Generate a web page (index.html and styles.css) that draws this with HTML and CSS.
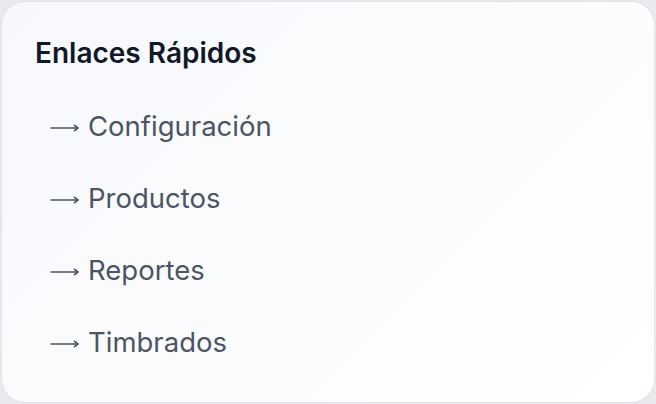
FILE: index.html
```html
<!DOCTYPE html>
<html lang="es">
<head>
<meta charset="utf-8">
<link rel="stylesheet" href="styles.css">
</head>
<body>
<section class="card">
  <h2 class="title">Enlaces Rápidos</h2>
  <ul class="links">
    <li><a href="#"><svg class="arrow" viewBox="0 0 29 12" width="29" height="12"><path d="M0.5 6H28M24 2.8L28 6L24 9.2"/></svg>Configuración</a></li>
    <li><a href="#"><svg class="arrow" viewBox="0 0 29 12" width="29" height="12"><path d="M0.5 6H28M24 2.8L28 6L24 9.2"/></svg>Productos</a></li>
    <li><a href="#"><svg class="arrow" viewBox="0 0 29 12" width="29" height="12"><path d="M0.5 6H28M24 2.8L28 6L24 9.2"/></svg>Reportes</a></li>
    <li><a href="#"><svg class="arrow" viewBox="0 0 29 12" width="29" height="12"><path d="M0.5 6H28M24 2.8L28 6L24 9.2"/></svg>Timbrados</a></li>
  </ul>
</section>
</body>
</html>
```
FILE: styles.css
```css
html, body {
  margin: 0;
  padding: 0;
  background: #e9eaee;
  height: 100%;
}
body {
  padding: 1px;
  box-sizing: border-box;
  font-family: Inter, "Noto Sans", sans-serif;
}
.card {
  box-sizing: border-box;
  height: 100%;
  border: 1px solid #e1e3e8;
  border-radius: 24px;
  background: linear-gradient(135deg, #f7f8fc 0%, #ffffff 100%);
  padding: 33px 33px;
}
.title {
  margin: 0;
  font-size: 28px;
  font-weight: 600;
  color: #111827;
  line-height: 36px;
}
.links {
  list-style: none;
  margin: 37px 0 0;
  padding: 0 0 0 15px;
  display: flex;
  flex-direction: column;
  gap: 36px;
}
.links a {
  font-size: 27.5px;
  line-height: 36px;
  color: #4b5563;
  text-decoration: none;
}
.arrow {
  fill: none;
  stroke: currentColor;
  stroke-width: 1.6;
  stroke-linecap: butt;
  stroke-linejoin: miter;
  vertical-align: 2.5px;
  margin-right: 9px;
}
```
